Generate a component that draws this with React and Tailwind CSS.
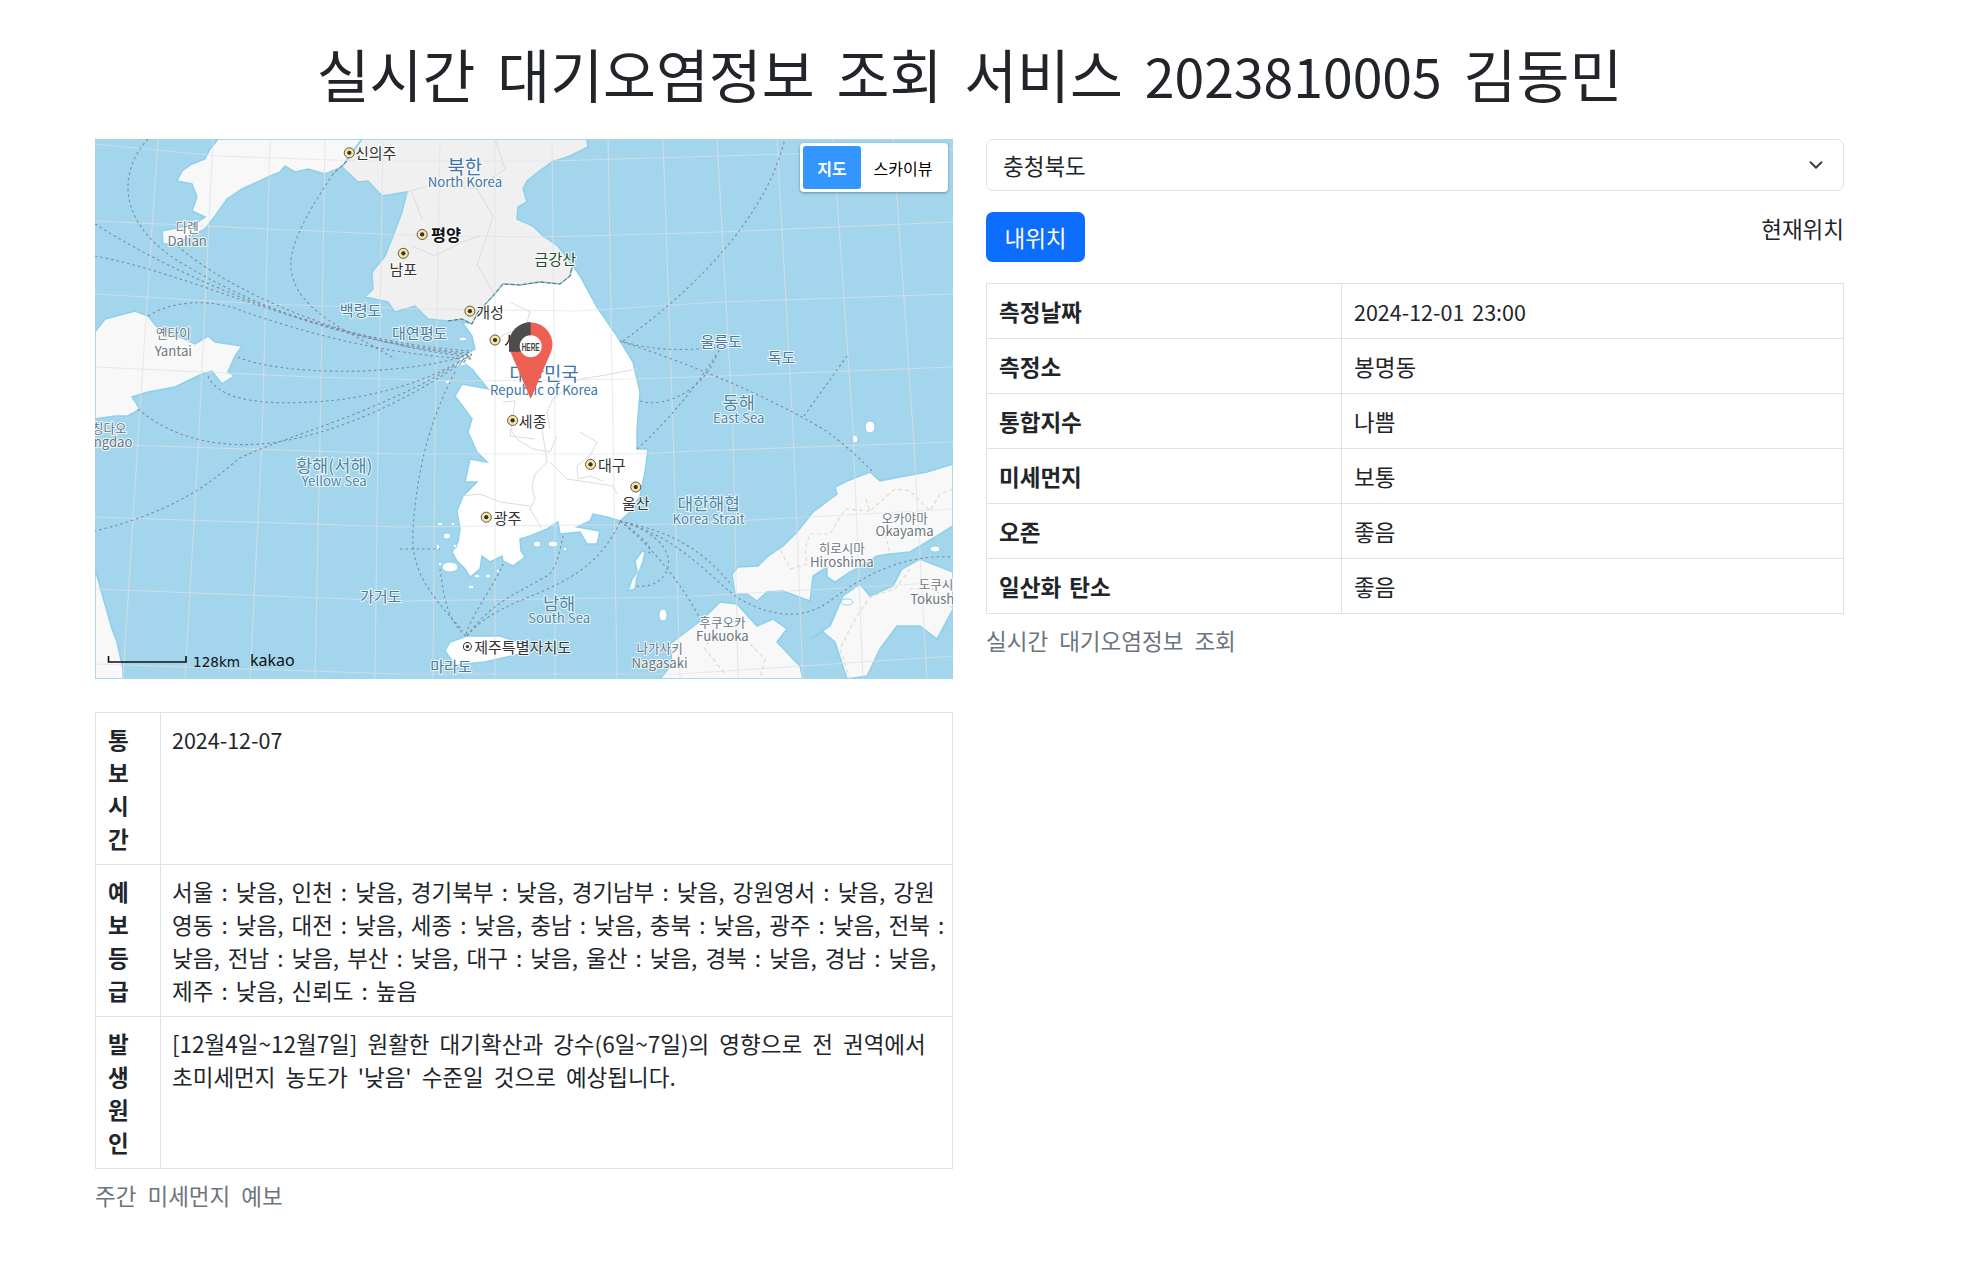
import { ChevronDown } from "lucide-react";

const gridLines = [
  "0,5 123,17 267,22 457,22 625,17 858,10",
  "0,82 173,90 333,97 452,98 625,93 858,83",
  "0,155 167,165 333,170 482,172 625,163 858,155",
  "0,228 217,238 367,242 538,240 625,237 858,228",
  "0,305 305,315 542,315 600,312 858,303",
  "0,378 305,388 585,385 858,370",
  "0,450 305,462 585,458 858,443",
  "0,525 305,535 585,535 858,517",
  "63,0 43,300 28,540",
  "118,0 103,313 90,540",
  "175,0 167,300 155,540",
  "230,0 225,300 220,540",
  "288,0 283,300 280,540",
  "345,0 340,290 338,540",
  "400,0 400,290 400,540",
  "457,0 460,290 460,540",
  "513,0 518,290 522,540",
  "568,0 578,290 585,540",
  "622,0 638,290 643,540",
  "682,0 698,290 708,540",
  "738,0 758,290 768,540",
  "798,0 818,290 832,540",
];

const routes = [
  "M0 85 C120 160 260 205 377 212",
  "M0 117 C100 135 230 205 377 214",
  "M53 0 C25 30 20 80 80 120 C160 170 260 205 377 216",
  "M83 107 C130 150 250 205 377 218",
  "M53 177 C80 160 120 160 150 173 C200 190 280 215 377 220",
  "M143 218 C180 235 300 240 377 215",
  "M113 237 C125 265 180 265 217 263 C280 260 340 240 377 215",
  "M43 270 C90 310 150 308 183 303 C260 290 330 250 377 217",
  "M238 35 C215 70 190 110 197 135 C205 175 260 195 300 220",
  "M377 215 C300 270 180 300 143 320 C110 350 70 375 0 392",
  "M360 233 C335 280 322 330 318 390 C316 430 330 450 368 492",
  "M372 497 C410 450 490 460 525 383",
  "M372 497 C395 465 420 455 452 437 C462 430 465 410 468 397",
  "M371 495 C380 470 400 445 408 425",
  "M371 497 C350 480 348 450 345 430",
  "M305 410 L345 410",
  "M525 382 C550 400 560 410 553 415",
  "M525 382 C570 395 580 420 570 435 C560 450 545 447 540 447",
  "M525 382 C560 390 600 400 637 447",
  "M525 382 C560 410 590 450 605 480",
  "M525 382 C590 400 620 445 645 460 C680 480 710 480 735 462 C770 435 810 415 858 418",
  "M525 202 C560 212 590 212 625 208",
  "M528 203 C580 220 660 250 728 290 C750 305 765 320 778 333",
  "M528 202 C600 150 670 80 690 0",
  "M542 310 C570 285 600 250 625 210",
  "M545 262 C570 270 610 250 622 215",
  "M709 277 L752 217",
];

const borders = [
  "447,290 452,323 440,335 437,348 440,360 435,370 447,390",
  "455,323 472,340 492,343 518,347 522,355",
  "368,357 385,355 405,363 435,367",
  "415,290 422,300 438,310 455,313 462,297",
  "485,293 502,303 495,317 482,327 483,340 495,337 508,342",
  "415,163 435,173 430,190 410,195 395,205",
  "485,240 505,237 542,230",
  "485,240 458,260 452,273 455,290",
  "408,263 420,262 415,297 440,300",
  "317,107 340,117 367,103 385,97",
  "383,127 400,157",
  "327,80 317,53",
  "382,50 398,77 392,97 382,127",
  "312,53 340,45 382,50 410,30 400,0",
];

const japanBorders = [
  "858,350 845,355 835,372 815,352 800,350 775,372 770,358",
  "775,372 750,370 735,395 715,395 710,410 712,425 695,430 685,410",
  "790,395 795,415",
  "815,430 800,450 775,458 760,480 745,510 755,540",
  "858,470 840,450 815,450",
  "620,490 610,510 630,535",
  "650,500 670,520 665,540",
];

const labels = [
  { x: 299, y: 122, t: "신의주", c: "#333", s: 12 },
  { x: 370, y: 132, t: "북한", c: "#3d74a8", s: 15 },
  { x: 370, y: 145, t: "North Korea", c: "#3d74a8", s: 10.5 },
  { x: 149, y: 181, t: "다롄", c: "#6b7780", s: 10 },
  { x: 149, y: 192, t: "Dalian", c: "#6b7780", s: 10.5 },
  { x: 355, y: 187, t: "평양", c: "#111", s: 13, w: 600 },
  { x: 321, y: 214, t: "남포", c: "#333", s: 12 },
  { x: 442, y: 206, t: "금강산", c: "#23482a", s: 12 },
  { x: 390, y: 248, t: "개성", c: "#333", s: 12 },
  { x: 287, y: 247, t: "백령도", c: "#4c7a9a", s: 12 },
  { x: 334, y: 265, t: "대연평도", c: "#4c7a9a", s: 12 },
  { x: 138, y: 265, t: "옌타이", c: "#6b7780", s: 10 },
  { x: 138, y: 279, t: "Yantai", c: "#6b7780", s: 10.5 },
  { x: 413, y: 271, t: "서울", c: "#111", s: 13 },
  { x: 433, y: 297, t: "대한민국", c: "#3d74a8", s: 15 },
  { x: 433, y: 310, t: "Republic of Korea", c: "#3d74a8", s: 10.5 },
  { x: 574, y: 271, t: "울릉도", c: "#4c7a9a", s: 12 },
  { x: 622, y: 284, t: "독도", c: "#4c7a9a", s: 12 },
  { x: 588, y: 320, t: "동해", c: "#4a86a3", s: 14 },
  { x: 588, y: 333, t: "East Sea", c: "#4a86a3", s: 10.5 },
  { x: 424, y: 335, t: "세종", c: "#333", s: 12 },
  { x: 87, y: 341, t: "칭다오", c: "#6b7780", s: 10 },
  { x: 90, y: 352, t: "ngdao", c: "#6b7780", s: 10.5 },
  { x: 266, y: 370, t: "황해(서해)", c: "#4a86a3", s: 14 },
  { x: 266, y: 383, t: "Yellow Sea", c: "#4a86a3", s: 10.5 },
  { x: 487, y: 370, t: "대구", c: "#333", s: 12 },
  { x: 506, y: 400, t: "울산", c: "#333", s: 12 },
  { x: 564, y: 400, t: "대한해협", c: "#4a86a3", s: 13.5 },
  { x: 564, y: 413, t: "Korea Strait", c: "#4a86a3", s: 10.5 },
  { x: 404, y: 412, t: "광주", c: "#333", s: 12 },
  { x: 720, y: 412, t: "오카야마", c: "#6b7780", s: 10 },
  { x: 720, y: 423, t: "Okayama", c: "#6b7780", s: 10.5 },
  { x: 670, y: 436, t: "히로시마", c: "#6b7780", s: 10 },
  { x: 670, y: 447, t: "Hiroshima", c: "#6b7780", s: 10.5 },
  { x: 745, y: 465, t: "도쿠시", c: "#6b7780", s: 10 },
  { x: 742, y: 477, t: "Tokush", c: "#6b7780", s: 10.5 },
  { x: 303, y: 474, t: "가거도", c: "#4c7a9a", s: 12 },
  { x: 445, y: 480, t: "남해", c: "#4a86a3", s: 14 },
  { x: 445, y: 492, t: "South Sea", c: "#4a86a3", s: 10.5 },
  { x: 575, y: 495, t: "후쿠오카", c: "#6b7780", s: 10 },
  { x: 575, y: 506, t: "Fukuoka", c: "#6b7780", s: 10.5 },
  { x: 416, y: 515, t: "제주특별자치도", c: "#333", s: 12 },
  { x: 525, y: 516, t: "나가사키", c: "#6b7780", s: 10 },
  { x: 525, y: 528, t: "Nagasaki", c: "#6b7780", s: 10.5 },
  { x: 359, y: 530, t: "마라도", c: "#4c7a9a", s: 12 },
];

const cityDots = [
  [278, 122],
  [336, 187],
  [321, 202],
  [374, 248],
  [394, 271],
  [408, 335],
  [470, 370],
  [506, 388],
  [387, 412],
];

// little islands round the coast, cx cy rx ry
const islands = [
  [355, 428, 8, 5],
  [382, 437, 3, 2],
  [352, 397, 4, 3],
  [345, 385, 3, 2],
  [358, 385, 2, 2],
  [343, 408, 2, 3],
  [360, 407, 2, 2],
  [345, 425, 2, 2],
  [376, 448, 3, 2],
  [393, 437, 3, 2],
  [403, 432, 2, 2],
  [442, 405, 4, 3],
  [458, 405, 5, 3],
  [470, 410, 2, 2],
  [353, 243, 3, 2],
  [368, 200, 4, 2],
  [365, 225, 6, 2],
  [568, 476, 4, 6],
  [775, 288, 5, 6],
  [760, 300, 3, 4],
  [752, 463, 6, 3],
  [840, 410, 5, 3],
];

function MapLabel({ x, y, t, c, s, w }) {
  return (
    <text
      x={x}
      y={y}
      fill={c}
      fontSize={s}
      fontWeight={w || 400}
      textAnchor="middle"
      dominantBaseline="central"
      stroke="#ffffff"
      strokeOpacity="0.8"
      strokeWidth="1.6"
      paintOrder="stroke"
      fontFamily="'Noto Sans CJK KR', 'Noto Sans', sans-serif"
    >
      {t}
    </text>
  );
}

function KoreaMap() {
  return (
    <svg viewBox="0 0 858 540" className="block h-[540px] w-[858px] [word-spacing:0]">
      <rect width="858" height="540" fill="#a3d5ec" />

      {/* land, traced against the picture */}
      <g stroke="#8fd0ea" strokeWidth="1.5" fill="#f8f8f8">
        <path d="M123 0 L115 10 L110 20 L97 25 L87 32 L82 42 L97 45 L102 58 L97 72 L110 78 L100 85 L67 92 L68 105 L80 105 L110 90 L120 77 L132 60 L147 50 L173 38 L185 33 L190 27 L200 33 L213 30 L230 35 L247 28 L267 0 Z" />
        <path d="M0 193 L10 180 L40 172 L53 177 L62 188 L83 197 L100 205 L113 197 L120 203 L147 207 L140 217 L133 233 L140 237 L127 245 L117 232 L107 235 L80 248 L53 253 L37 258 L45 270 L33 277 L20 277 L0 280 Z" />
        <path d="M0 430 L17 490 L22 503 L28 530 L28 540 L0 540 Z" />
        <path d="M858 325 L832 333 L805 338 L785 342 L775 333 L752 342 L740 348 L742 355 L718 373 L702 393 L688 407 L672 418 L663 427 L643 428 L637 435 L640 455 L652 455 L662 462 L672 453 L688 452 L715 462 L718 437 L732 428 L732 438 L740 443 L755 433 L765 428 L782 417 L795 415 L815 413 L842 397 L858 387 Z" />
        <path d="M765 445 L775 457 L798 447 L807 430 L825 420 L858 433 L858 470 L842 500 L825 487 L802 487 L785 510 L772 537 L752 540 L740 503 L728 493 L715 500 L735 487 L748 457 Z" />
        <path d="M592 492 L608 480 L625 463 L642 465 L662 487 L678 480 L692 490 L682 503 L698 520 L705 527 L708 540 L565 540 L577 525 L575 505 Z" />
        <path d="M547 412 L540 422 L542 433 L537 440 L533 452 L540 450 L542 438 L548 423 L550 413 Z" />
      </g>
      <path
        d="M267 0 L491.7 0 L493 8 L475 17 L457 23 L443 33 L432 42 L428 50 L432 63 L423 68 L422 80 L438 87 L448 97 L463 107 L478 127 L475 137 L465 145 L445 143 L425 146 L408 145 L398 157 L383 173 L377 185 L367 180 L353 182 L333 180 L320 167 L300 173 L293 163 L270 158 L278 150 L277 133 L290 117 L298 97 L307 73 L312 53 L287 57 L273 42 L263 43 L247 28 Z"
        fill="#f0f0f0"
        stroke="#8fd0ea"
        strokeWidth="1.5"
      />
      <path
        d="M478 127 L485 137 L502 168 L522 197 L538 223 L545 253 L542 290 L542 310 L553 310 L550 333 L545 357 L535 373 L525 382 L512 378 L498 375 L495 382 L482 388 L505 392 L502 405 L492 405 L485 393 L465 395 L463 383 L452 390 L435 397 L425 400 L426 412 L430 418 L418 427 L408 422 L407 417 L395 423 L387 417 L385 430 L375 438 L370 430 L362 422 L357 413 L363 403 L365 390 L362 372 L368 357 L382 343 L370 343 L375 320 L392 323 L382 313 L373 293 L377 280 L360 257 L367 245 L393 250 L377 230 L363 220 L380 210 L377 197 L367 183 L377 185 L383 173 L398 157 L408 145 L425 146 L445 143 L465 145 L475 137 Z"
        fill="#ffffff"
        stroke="#8fd0ea"
        strokeWidth="1.5"
      />
      <path d="M350 512 L355 503 L372 497 L405 497 L430 505 L425 515 L390 523 L360 526 Z" fill="#ffffff" stroke="#8fd0ea" strokeWidth="1.5" />
      {islands.map(([cx, cy, rx, ry]) => (
        <ellipse key={`${cx}-${cy}`} cx={cx} cy={cy} rx={rx} ry={ry} fill="#ffffff" stroke="#8fd0ea" strokeWidth="1" />
      ))}

      {gridLines.map((points) => (
        <polyline key={points} points={points} fill="none" stroke="#dde2e5" strokeOpacity="0.65" strokeWidth="1.2" />
      ))}
      {borders.map((points) => (
        <polyline key={points} points={points} fill="none" stroke="#dcdcdc" strokeWidth="1" />
      ))}
      {japanBorders.map((points) => (
        <polyline key={points} points={points} fill="none" stroke="#e0dbc9" strokeWidth="1.2" strokeDasharray="4 3" />
      ))}
      {routes.map((d) => (
        <path key={d} d={d} fill="none" stroke="#7f8ba0" strokeWidth="1.1" strokeDasharray="2.5 3" />
      ))}
      <polyline
        points="353,182 367,180 377,185 383,173 398,157 408,145 425,146 445,143 465,145 475,137 477,127"
        fill="none"
        stroke="#666"
        strokeWidth="1"
        strokeDasharray="4 2"
      />
      <polyline points="252,22 238,35" fill="none" stroke="#666" strokeWidth="1" strokeDasharray="4 2" />

      <g transform="scale(1.2564) translate(-75.6 -111)">
        {labels.map((l) => (
          <MapLabel key={l.t} {...l} />
        ))}
        {cityDots.map(([x, y]) => (
          <g key={`${x}-${y}`}>
            <circle cx={x} cy={y} r="4" fill="#fbe6a0" stroke="#444" strokeWidth="0.7" />
            <circle cx={x} cy={y} r="1.7" fill="#333" />
          </g>
        ))}
        <circle cx="372" cy="515" r="3.2" fill="#fff" stroke="#333" strokeWidth="0.8" />
        <circle cx="372" cy="515" r="1.3" fill="#333" />
      </g>

      {/* marker */}
      <path d="M435.7 260 L415.5 213 A21.7 21.7 0 1 1 456 213 Z" fill="#ee6152" />
      <path d="M435.7 183 A21.7 21.7 0 0 0 414 204.5 L414 212.7 L435.7 212.7 Z" fill="#4d4d4d" />
      <circle cx="435.7" cy="207.3" r="11" fill="#ffffff" />
      <text
        x="426.7"
        y="207.5"
        fontSize="11"
        fontWeight="700"
        fill="#444"
        dominantBaseline="central"
        textLength="18"
        lengthAdjust="spacingAndGlyphs"
        fontFamily="'Liberation Sans', sans-serif"
      >
        HERE
      </text>

      {/* scale */}
      <path d="M13.5 517 V523 H91 V517" fill="none" stroke="#111" strokeWidth="1.6" />
      <text x="98" y="528" fontSize="14" fill="#111" fontFamily="'DejaVu Sans', sans-serif" textLength="47" lengthAdjust="spacingAndGlyphs">
        128km
      </text>
      <text x="155" y="527" fontSize="16" fill="#111" fontFamily="'Noto Sans', sans-serif">
        kakao
      </text>
    </svg>
  );
}

function MapTypeControl() {
  return (
    <div className="absolute right-[5px] top-[4px] flex h-[49px] w-[148px] rounded-[4px] bg-white p-[3px] shadow-[0_1px_3px_rgba(0,0,0,0.35)]">
      <div className="flex w-[58px] items-center justify-center rounded-[3px] bg-[#3396ff] text-[16px] leading-none font-bold text-white">지도</div>
      <div className="flex flex-1 items-center justify-center text-[16px] leading-none text-black">스카이뷰</div>
    </div>
  );
}

const airRows = [
  ["측정날짜", <span className="text-[21.5px]">2024-12-01 23:00</span>],
  ["측정소", "봉명동"],
  ["통합지수", "나쁨"],
  ["미세먼지", "보통"],
  ["오존", "좋음"],
  ["일산화 탄소", "좋음"],
];

function AirTable() {
  return (
    <table className="w-full table-fixed border-collapse border border-[#dee2e6]">
      <colgroup>
        <col className="w-[355px]" />
        <col />
      </colgroup>
      <tbody>
        {airRows.map(([name, value]) => (
          <tr key={name} className="h-[55px]">
            <th className="border border-[#dee2e6] px-[12px] py-[10px] text-left font-bold">{name}</th>
            <td className="border border-[#dee2e6] px-[12px] py-[10px]">{value}</td>
          </tr>
        ))}
      </tbody>
    </table>
  );
}

function ForecastRow({ title, children }) {
  return (
    <tr>
      <th className="border border-[#dee2e6] pb-[9px] pl-[12px] pr-[14px] pt-[10px] text-left align-top font-bold">{title}</th>
      <td className="border border-[#dee2e6] px-[11px] pb-[9px] pt-[10px] align-top whitespace-nowrap">{children}</td>
    </tr>
  );
}

function ForecastTable() {
  return (
    <table className="w-full table-fixed border-collapse border border-[#dee2e6]">
      <colgroup>
        <col className="w-[65px]" />
        <col />
      </colgroup>
      <tbody>
        <ForecastRow title="통보시간">
          <span className="text-[21.5px]">2024-12-07</span>
        </ForecastRow>
        <ForecastRow title="예보등급">
          서울 : 낮음, 인천 : 낮음, 경기북부 : 낮음, 경기남부 : 낮음, 강원영서 : 낮음, 강원
          <br />
          영동 : 낮음, 대전 : 낮음, 세종 : 낮음, 충남 : 낮음, 충북 : 낮음, 광주 : 낮음, 전북 :
          <br />
          낮음, 전남 : 낮음, 부산 : 낮음, 대구 : 낮음, 울산 : 낮음, 경북 : 낮음, 경남 : 낮음,
          <br />
          제주 : 낮음, 신뢰도 : 높음
        </ForecastRow>
        <ForecastRow title="발생원인">
          <span className="[word-spacing:5px]">
            [12월4일~12월7일] 원활한 대기확산과 강수(6일~7일)의 영향으로 전 권역에서
            <br />
            초미세먼지 농도가 '낮음' 수준일 것으로 예상됩니다.
          </span>
        </ForecastRow>
      </tbody>
    </table>
  );
}

export default function App() {
  return (
    <div className="min-h-[1262px] bg-white font-['Noto_Sans_CJK_KR','Noto_Sans',sans-serif] text-[22.5px] leading-[33px] text-[#212529] [word-spacing:3px]">
      <div className="ml-[95px] w-[1749px]">
        <h1 className="pb-[34px] pt-[43px] text-center text-[57.5px] leading-[60px] font-normal [word-spacing:9px]">
          실시간 대기오염정보 조회 서비스 <span className="text-[53.5px]">2023810005</span> 김동민
        </h1>

        <div className="grid grid-cols-2 items-start gap-x-[33px]">
          <div>
            <div className="relative h-[540px] w-[858px] overflow-hidden">
              <KoreaMap />
              <MapTypeControl />
            </div>
            <div className="mt-[33px]">
              <ForecastTable />
            </div>
            <p className="mt-[10px] [word-spacing:6px] text-[#6c757d]">주간 미세먼지 예보</p>
          </div>

          <div>
            <div className="relative">
              <select className="h-[52px] w-full appearance-none rounded-[7px] border border-[#dee2e6] bg-white px-[16px] text-[22.5px] text-[#212529]" defaultValue="충청북도">
                <option>충청북도</option>
              </select>
              <ChevronDown className="pointer-events-none absolute right-[17px] top-[15px] h-[22px] w-[22px] text-[#343a40]" strokeWidth={2} />
            </div>

            <div className="mt-[21px] flex items-start justify-between">
              <button type="button" className="h-[50px] w-[99px] rounded-[7px] bg-[#0d6efd] text-[22.5px] text-white">
                내위치
              </button>
              <span>현재위치</span>
            </div>

            <div className="mt-[21px]">
              <AirTable />
            </div>
            <p className="mt-[10px] [word-spacing:6px] text-[#6c757d]">실시간 대기오염정보 조회</p>
          </div>
        </div>
      </div>
    </div>
  );
}
